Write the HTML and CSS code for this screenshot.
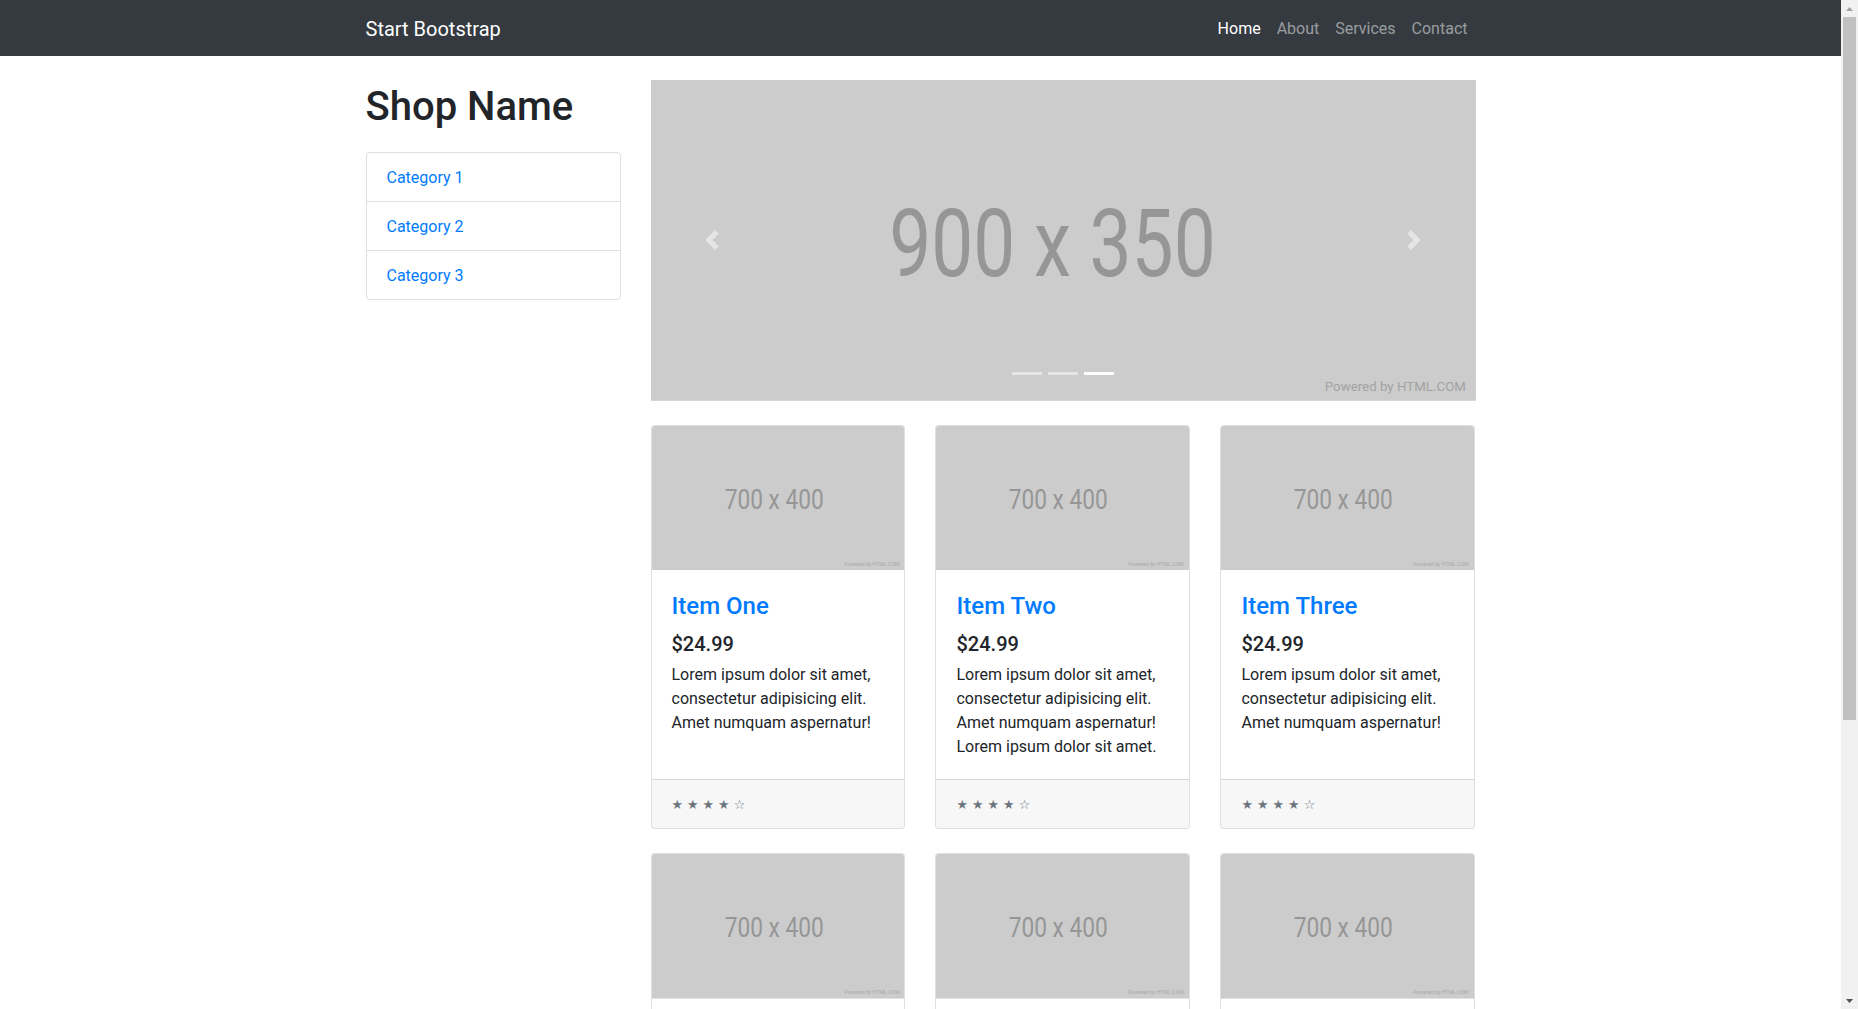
FILE: index.html
```html
<!DOCTYPE html>
<html lang="en">
<head>
<meta charset="utf-8">
<title>Shop Homepage - Start Bootstrap Template</title>
<link rel="stylesheet" href="styles.css">
</head>
<body>
<div class="page">
<nav class="navbar">
  <div class="container nav-inner">
    <a class="brand" href="#">Start Bootstrap</a>
    <ul class="nav-links">
      <li><a class="nav-link active" href="#">Home</a></li>
      <li><a class="nav-link" href="#">About</a></li>
      <li><a class="nav-link" href="#">Services</a></li>
      <li><a class="nav-link" href="#">Contact</a></li>
    </ul>
  </div>
</nav>

<div class="container">
  <div class="row">
    <div class="sidebar">
      <h1 class="shop-name">Shop Name</h1>
      <div class="list-group">
        <a href="#" class="list-item">Category 1</a>
        <a href="#" class="list-item">Category 2</a>
        <a href="#" class="list-item">Category 3</a>
      </div>
    </div>

    <div class="main">
      <div class="carousel">
        <svg class="carousel-img" viewBox="0 0 900 350" preserveAspectRatio="none">
          <rect width="900" height="350" fill="#cccccc"/>
          <text x="260" y="214" font-family="Roboto, sans-serif" font-size="103" fill="#969696" textLength="356" lengthAdjust="spacingAndGlyphs">900 x 350</text>
          <text x="735" y="339" font-family="Roboto, sans-serif" font-size="14" fill="#a3a3a3" textLength="154" lengthAdjust="spacingAndGlyphs">Powered by HTML.COM</text>
        </svg>
        <ol class="indicators">
          <li></li>
          <li></li>
          <li class="active"></li>
        </ol>
        <a class="control control-prev" href="#">
          <svg class="control-icon" viewBox="0 0 8 8"><path fill="#fff" d="M5.25 0l-4 4 4 4 1.5-1.5-2.5-2.5 2.5-2.5-1.5-1.5z"/></svg>
        </a>
        <a class="control control-next" href="#">
          <svg class="control-icon" viewBox="0 0 8 8"><path fill="#fff" d="M2.75 0l-1.5 1.5 2.5 2.5-2.5 2.5 1.5 1.5 4-4-4-4z"/></svg>
        </a>
      </div>

      <div class="cards">
        <div class="col">
          <div class="card">
            <svg class="card-img" viewBox="0 0 700 400" preserveAspectRatio="none">
              <rect width="700" height="400" fill="#cccccc"/>
              <text x="201" y="230" font-family="Roboto, sans-serif" font-size="79" fill="#969696" textLength="274" lengthAdjust="spacingAndGlyphs">700 x 400</text>
              <text x="532" y="388" font-family="Roboto, sans-serif" font-size="13" fill="#a8a8a8" textLength="153" lengthAdjust="spacingAndGlyphs">Powered by HTML.COM</text>
            </svg>
            <div class="card-body">
              <h4 class="card-title"><a href="#">Item One</a></h4>
              <h5 class="price">$24.99</h5>
              <p class="card-text">Lorem ipsum dolor sit amet, consectetur adipisicing elit. Amet numquam aspernatur!</p>
            </div>
            <div class="card-footer"><small class="stars">&#9733; &#9733; &#9733; &#9733; &#9734;</small></div>
          </div>
        </div>

        <div class="col">
          <div class="card">
            <svg class="card-img" viewBox="0 0 700 400" preserveAspectRatio="none">
              <rect width="700" height="400" fill="#cccccc"/>
              <text x="201" y="230" font-family="Roboto, sans-serif" font-size="79" fill="#969696" textLength="274" lengthAdjust="spacingAndGlyphs">700 x 400</text>
              <text x="532" y="388" font-family="Roboto, sans-serif" font-size="13" fill="#a8a8a8" textLength="153" lengthAdjust="spacingAndGlyphs">Powered by HTML.COM</text>
            </svg>
            <div class="card-body">
              <h4 class="card-title"><a href="#">Item Two</a></h4>
              <h5 class="price">$24.99</h5>
              <p class="card-text">Lorem ipsum dolor sit amet, consectetur adipisicing elit. Amet numquam aspernatur! Lorem ipsum dolor sit amet.</p>
            </div>
            <div class="card-footer"><small class="stars">&#9733; &#9733; &#9733; &#9733; &#9734;</small></div>
          </div>
        </div>

        <div class="col">
          <div class="card">
            <svg class="card-img" viewBox="0 0 700 400" preserveAspectRatio="none">
              <rect width="700" height="400" fill="#cccccc"/>
              <text x="201" y="230" font-family="Roboto, sans-serif" font-size="79" fill="#969696" textLength="274" lengthAdjust="spacingAndGlyphs">700 x 400</text>
              <text x="532" y="388" font-family="Roboto, sans-serif" font-size="13" fill="#a8a8a8" textLength="153" lengthAdjust="spacingAndGlyphs">Powered by HTML.COM</text>
            </svg>
            <div class="card-body">
              <h4 class="card-title"><a href="#">Item Three</a></h4>
              <h5 class="price">$24.99</h5>
              <p class="card-text">Lorem ipsum dolor sit amet, consectetur adipisicing elit. Amet numquam aspernatur!</p>
            </div>
            <div class="card-footer"><small class="stars">&#9733; &#9733; &#9733; &#9733; &#9734;</small></div>
          </div>
        </div>

        <div class="col">
          <div class="card">
            <svg class="card-img" viewBox="0 0 700 400" preserveAspectRatio="none">
              <rect width="700" height="400" fill="#cccccc"/>
              <text x="201" y="230" font-family="Roboto, sans-serif" font-size="79" fill="#969696" textLength="274" lengthAdjust="spacingAndGlyphs">700 x 400</text>
              <text x="532" y="388" font-family="Roboto, sans-serif" font-size="13" fill="#a8a8a8" textLength="153" lengthAdjust="spacingAndGlyphs">Powered by HTML.COM</text>
            </svg>
            <div class="card-body">
              <h4 class="card-title"><a href="#">Item Four</a></h4>
              <h5 class="price">$24.99</h5>
              <p class="card-text">Lorem ipsum dolor sit amet, consectetur adipisicing elit. Amet numquam aspernatur!</p>
            </div>
            <div class="card-footer"><small class="stars">&#9733; &#9733; &#9733; &#9733; &#9734;</small></div>
          </div>
        </div>

        <div class="col">
          <div class="card">
            <svg class="card-img" viewBox="0 0 700 400" preserveAspectRatio="none">
              <rect width="700" height="400" fill="#cccccc"/>
              <text x="201" y="230" font-family="Roboto, sans-serif" font-size="79" fill="#969696" textLength="274" lengthAdjust="spacingAndGlyphs">700 x 400</text>
              <text x="532" y="388" font-family="Roboto, sans-serif" font-size="13" fill="#a8a8a8" textLength="153" lengthAdjust="spacingAndGlyphs">Powered by HTML.COM</text>
            </svg>
            <div class="card-body">
              <h4 class="card-title"><a href="#">Item Five</a></h4>
              <h5 class="price">$24.99</h5>
              <p class="card-text">Lorem ipsum dolor sit amet, consectetur adipisicing elit. Amet numquam aspernatur! Lorem ipsum dolor sit amet.</p>
            </div>
            <div class="card-footer"><small class="stars">&#9733; &#9733; &#9733; &#9733; &#9734;</small></div>
          </div>
        </div>

        <div class="col">
          <div class="card">
            <svg class="card-img" viewBox="0 0 700 400" preserveAspectRatio="none">
              <rect width="700" height="400" fill="#cccccc"/>
              <text x="201" y="230" font-family="Roboto, sans-serif" font-size="79" fill="#969696" textLength="274" lengthAdjust="spacingAndGlyphs">700 x 400</text>
              <text x="532" y="388" font-family="Roboto, sans-serif" font-size="13" fill="#a8a8a8" textLength="153" lengthAdjust="spacingAndGlyphs">Powered by HTML.COM</text>
            </svg>
            <div class="card-body">
              <h4 class="card-title"><a href="#">Item Six</a></h4>
              <h5 class="price">$24.99</h5>
              <p class="card-text">Lorem ipsum dolor sit amet, consectetur adipisicing elit. Amet numquam aspernatur!</p>
            </div>
            <div class="card-footer"><small class="stars">&#9733; &#9733; &#9733; &#9733; &#9734;</small></div>
          </div>
        </div>
      </div>
    </div>
  </div>
</div>

<footer class="site-footer">
  <div class="container">
    <p class="copyright">Copyright &copy; Your Website 2019</p>
  </div>
</footer>
</div>

<div class="scrollbar" aria-hidden="true">
  <div class="sb-button">
    <svg class="sb-arrow" viewBox="0 0 7 4"><path d="M3.5 0L7 4H0z" fill="#a3a3a3"/></svg>
  </div>
  <div class="sb-track"><div class="sb-thumb"></div></div>
  <div class="sb-button">
    <svg class="sb-arrow" viewBox="0 0 7 4"><path d="M0 0h7L3.5 4z" fill="#505050"/></svg>
  </div>
</div>
</body>
</html>
```

FILE: styles.css
```css
* { box-sizing: border-box; }

html, body {
  margin: 0;
  padding: 0;
}

body {
  display: flex;
  height: 100vh;
  overflow: hidden;
  font-family: Roboto, "Noto Sans", sans-serif;
  font-size: 16px;
  line-height: 1.5;
  color: #212529;
  background: #fff;
}

.page {
  flex: 1 1 auto;
  min-width: 0;
  height: 100vh;
  overflow: hidden;
}

a { text-decoration: none; }

.container {
  width: 1140px;
  margin: 0 auto;
  padding: 0 15px;
}

/* Fake classic scrollbar */
.scrollbar {
  flex: 0 0 17px;
  display: flex;
  flex-direction: column;
  background: #f1f1f1;
}

.sb-button {
  flex: 0 0 17px;
  display: flex;
  align-items: center;
  justify-content: center;
}

.sb-arrow {
  width: 7px;
  height: 4px;
  display: block;
}

.sb-track {
  flex: 1 1 auto;
  padding: 0 2px;
}

.sb-thumb {
  height: 703px;
  background: #c1c1c1;
}

/* Navbar */
.navbar {
  background: #343a40;
  padding: 8px 16px;
}

.nav-inner {
  display: flex;
  align-items: center;
  justify-content: space-between;
}

.brand {
  font-size: 20px;
  line-height: 30px;
  padding: 6px 0 4px;
  margin-right: 16px;
  color: #fff;
}

.nav-links {
  display: flex;
  list-style: none;
  margin: 0;
  padding: 0;
}

.nav-link {
  display: block;
  padding: 9px 8px 7px;
  color: rgba(255, 255, 255, 0.5);
}

.nav-link.active { color: #fff; }

/* Layout */
.row {
  display: flex;
  margin: 0 -15px;
}

.sidebar {
  flex: 0 0 25%;
  padding: 0 15px;
}

.main {
  flex: 0 0 75%;
  padding: 0 15px;
}

.shop-name {
  margin: 24px 0 21px;
  padding-top: 3px;
  font-size: 40px;
  font-weight: 500;
  line-height: 1.2;
}

.list-group {
  display: flex;
  flex-direction: column;
  border: 1px solid rgba(0, 0, 0, 0.125);
  border-radius: 4px;
}

.list-item {
  display: block;
  padding: 13px 20px 11px;
  color: #007bff;
  border-top: 1px solid rgba(0, 0, 0, 0.125);
}

.list-item:first-child { border-top: none; }

/* Carousel */
.carousel {
  position: relative;
  margin: 24px 0;
}

.carousel-img {
  display: block;
  width: 100%;
  height: 320.8px;
}

.indicators {
  position: absolute;
  left: 15%;
  right: 15%;
  bottom: 0;
  margin: 0 0 16px;
  padding: 0;
  list-style: none;
  display: flex;
  justify-content: center;
}

.indicators li {
  width: 30px;
  height: 3px;
  margin: 0 3px;
  box-sizing: content-box;
  background-clip: padding-box;
  border-top: 10px solid transparent;
  border-bottom: 10px solid transparent;
  background-color: #fff;
  opacity: 0.5;
}

.indicators li.active { opacity: 1; }

.control {
  position: absolute;
  top: 0;
  bottom: 0;
  width: 15%;
  display: flex;
  align-items: center;
  justify-content: center;
  opacity: 0.5;
}

.control-prev { left: 0; }
.control-next { right: 0; }

.control-icon {
  width: 20px;
  height: 20px;
}

/* Cards */
.cards {
  display: flex;
  flex-wrap: wrap;
  margin: 0 -15px;
}

.col {
  flex: 0 0 33.3333%;
  padding: 0 15px;
  margin-bottom: 24px;
}

.card {
  height: 100%;
  display: flex;
  flex-direction: column;
  border: 1px solid rgba(0, 0, 0, 0.125);
  border-radius: 4px;
  overflow: hidden;
  background: #fff;
}

.card-img {
  display: block;
  width: 100%;
  aspect-ratio: 700 / 400;
  height: auto;
}

.card-body {
  flex: 1 1 auto;
  padding: 20px;
}

.card-title {
  margin: 0 0 10px;
  padding-top: 2px;
  font-size: 24px;
  font-weight: 500;
  line-height: 1.2;
}

.card-title a { color: #007bff; }

.price {
  margin: 0 0 7px;
  padding-top: 1px;
  font-size: 20px;
  font-weight: 500;
  line-height: 1.2;
}

.card-text { margin: 0; }

.card-footer {
  padding: 12px 20px;
  background: rgba(0, 0, 0, 0.03);
  border-top: 1px solid rgba(0, 0, 0, 0.125);
}

.stars {
  font-family: "DejaVu Sans", sans-serif;
  font-size: 80%;
  color: #6c757d;
}

/* Footer */
.site-footer {
  background: #343a40;
  padding: 48px 0;
}

.copyright {
  margin: 0;
  text-align: center;
  color: #fff;
}
```
